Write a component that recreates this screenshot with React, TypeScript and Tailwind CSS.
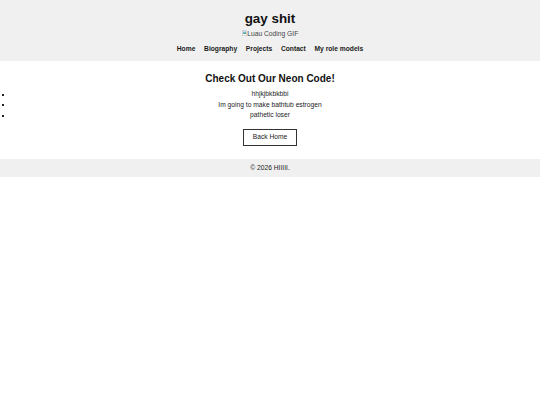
import React from 'react';

const navLinks = ['Home', 'Biography', 'Projects', 'Contact', 'My role models'];
const items = ['hhjkjbkbkbbi', 'Im going to make bathtub estrogen', 'pathetic loser'];

function BrokenImage() {
  return (
    <svg width="5" height="6" viewBox="0 0 10 12" className="inline-block mr-[0.5px] align-[-0.5px]">
      <path d="M0.5 0.5 H7 L9.5 3 V11.5 H0.5 Z" fill="#fff" stroke="#9a9a9a" />
      <rect x="2" y="3" width="6" height="5" fill="#7fb2e5" />
      <path d="M2 8 L4 5.5 L6 7 L8 5 V8 Z" fill="#4caf50" />
    </svg>
  );
}

export default function App() {
  return (
    <div className="min-h-[405px] bg-white text-[#222] font-['Liberation_Sans',Arial,sans-serif]">
      <header className="bg-[#f0f0f0] text-center pt-[11px] pb-[8.5px]">
        <h1 className="text-[13.4px] leading-[15.5px] font-bold text-[#111]">gay shit</h1>
        <div className="mt-[3px] text-[6.7px] leading-[8px] text-[#444]">
          <BrokenImage />
          Luau Coding GIF
        </div>
        <nav className="mt-[7px] flex justify-center gap-[8.7px] text-[6.7px] leading-[8px] font-bold text-[#1a1a1a]">
          {navLinks.map((l) => (
            <a key={l}>{l}</a>
          ))}
        </nav>
      </header>

      <main className="text-center pt-[11.5px] pb-[13px]">
        <h2 className="text-[10px] leading-[11.5px] font-bold text-[#111]">Check Out Our Neon Code!</h2>
        <ul className="mt-[5.3px] text-[6.7px] leading-[10.5px] text-[#222]">
          {items.map((it) => (
            <li key={it} className="grid grid-cols-[8px_1fr_8px] items-center">
              <span className="ml-[2px] w-[2px] h-[2px] bg-[#222]" />
              <span>{it}</span>
              <span />
            </li>
          ))}
        </ul>
        <button className="mt-[8px] border border-[#333] bg-white px-[8.3px] h-[17.4px] text-[6.7px] leading-[8px] text-[#1a1a1a]">
          Back Home
        </button>
      </main>

      <footer className="bg-[#f0f0f0] text-center h-[17.7px] flex items-center justify-center text-[6.7px] text-[#222]">
        © 2026 HIIIII.
      </footer>
    </div>
  );
}
